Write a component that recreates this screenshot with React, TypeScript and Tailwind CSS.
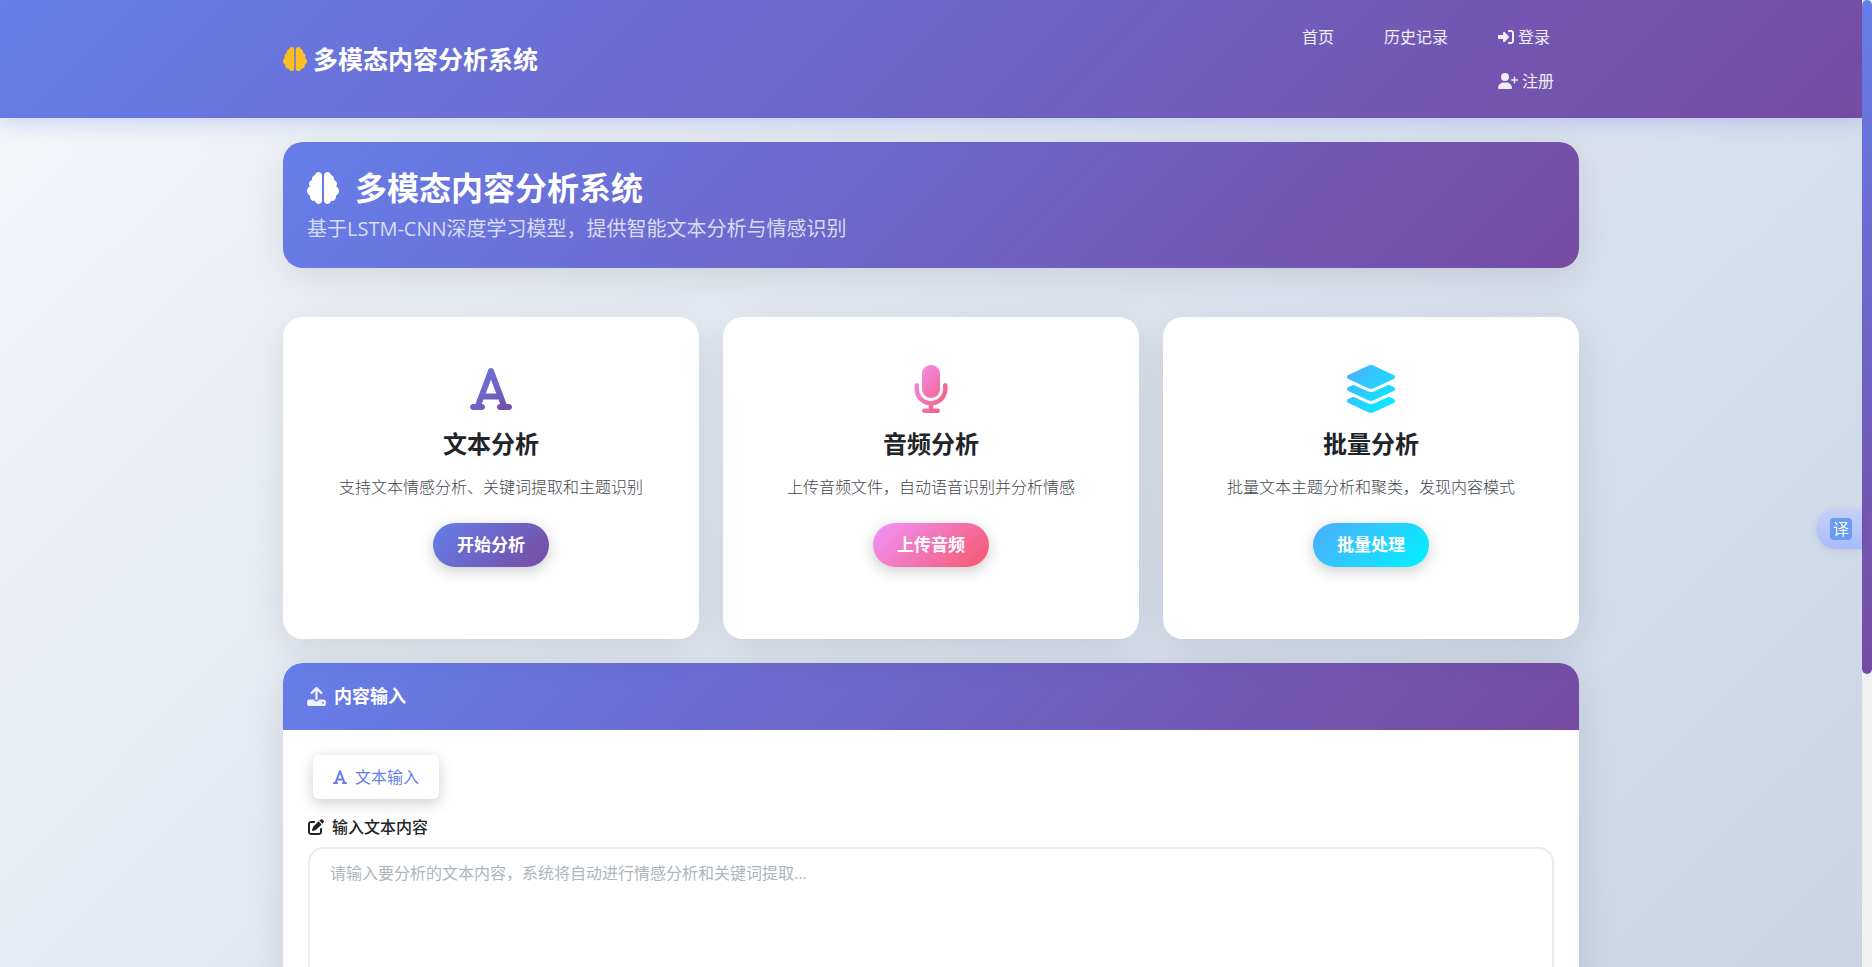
import React, { useState } from 'react';
import {
  FaBrain,
  FaFont,
  FaLayerGroup,
  FaMicrophone,
  FaPenToSquare,
  FaRightToBracket,
  FaUserPlus,
} from 'react-icons/fa6';

const features = [
  {
    id: 'text',
    icon: FaFont,
    iconSize: 'w-12 h-12',
    title: '文本分析',
    desc: '支持文本情感分析、关键词提取和主题识别',
    action: '开始分析',
    from: '#667eea',
    to: '#764ba2',
    button: 'from-[#667eea] to-[#764ba2]',
  },
  {
    id: 'audio',
    icon: FaMicrophone,
    iconSize: 'w-12 h-12',
    title: '音频分析',
    desc: '上传音频文件，自动语音识别并分析情感',
    action: '上传音频',
    from: '#f093fb',
    to: '#f5576c',
    button: 'from-[#f093fb] to-[#f5576c]',
  },
  {
    id: 'batch',
    icon: FaLayerGroup,
    iconSize: 'w-[54px] h-12',
    title: '批量分析',
    desc: '批量文本主题分析和聚类，发现内容模式',
    action: '批量处理',
    from: '#4facfe',
    to: '#00f2fe',
    button: 'from-[#4facfe] to-[#00f2fe]',
  },
];

const UploadIcon = () => (
  <svg viewBox="0 0 512 512" className="w-[19px] h-[19px] fill-current opacity-90" aria-hidden="true">
    <path d="M288 109v211c0 18-14 32-32 32s-32-14-32-32V109l-73 74c-13 12-33 12-46 0s-12-33 0-46L233 9c13-12 33-12 46 0l128 128c12 13 12 33 0 46s-33 12-46 0zM64 336h124c8 32 36 52 68 52s60-20 68-52h124c35 0 64 29 64 64v48c0 35-29 64-64 64H64c-35 0-64-29-64-64v-48c0-35 29-64 64-64zm368 112a24 24 0 1 0 0-48 24 24 0 1 0 0 48z" />
  </svg>
);

const NavLink = ({ label, children }: { label: string, children?: React.ReactNode }) => (
  <a href="#" className="mx-[5px] px-5 py-[10px] flex items-center gap-1 leading-6 text-white/90 hover:text-white">
    {children}
    <span>{label}</span>
  </a>
);

const FeatureCard = ({ feature }: { feature: typeof features[number] }) => {
  const Icon = feature.icon;
  const gradientId = `grad-${feature.id}`;

  return (
    <div className="bg-white rounded-[20px] shadow-[0_10px_40px_rgba(0,0,0,0.1)] min-h-[322px] px-6 py-12 flex flex-col items-center text-center">
      <svg width="0" height="0" className="absolute" aria-hidden="true">
        <linearGradient id={gradientId} x1="0" y1="0" x2="1" y2="1">
          <stop offset="0" stopColor={feature.from} />
          <stop offset="1" stopColor={feature.to} />
        </linearGradient>
      </svg>
      <Icon className={feature.iconSize} fill={`url(#${gradientId})`} />
      <h2 className="mt-4 text-2xl leading-[30px] font-bold text-[#212529]">{feature.title}</h2>
      <p className="mt-4 leading-6 font-light text-[#42474c]">{feature.desc}</p>
      <button className={`mt-6 px-6 py-[10px] rounded-full bg-linear-135/srgb ${feature.button} text-white text-[17px] leading-6 font-bold shadow-[0_4px_15px_rgba(0,0,0,0.2)]`}>
        {feature.action}
      </button>
    </div>
  );
};

export default function App() {
  const [content, setContent] = useState('');

  return (
    <div className="h-screen flex overflow-hidden bg-[#f1f1f1] text-base text-[#212529] font-['Open_Sans','Noto_Sans_CJK_SC',sans-serif]">
      <div className="flex-1 min-w-0 overflow-y-auto [scrollbar-width:none]">
        <div className="min-h-[1387px] bg-linear-135/srgb from-[#f5f7fa] to-[#c3cfe2]">
          {/* Navbar */}
          <header className="relative bg-linear-135/srgb from-[#667eea] to-[#764ba2] shadow-[0_4px_20px_rgba(102,126,234,0.3)] py-[15px]">
            <div className="max-w-[1320px] mx-auto px-3 flex items-center justify-between">
              <a href="#" className="flex items-center gap-1.5 text-[25px] leading-9 font-bold text-white">
                <FaBrain size={24} className="text-[#fbbf24]" />
                <span>多模态内容分析系统</span>
              </a>
              <nav className="flex items-start">
                <NavLink label="首页" />
                <NavLink label="历史记录" />
                <div>
                  <NavLink label="登录">
                    <FaRightToBracket />
                  </NavLink>
                  <NavLink label="注册">
                    <FaUserPlus className="w-5 h-4" />
                  </NavLink>
                </div>
              </nav>
            </div>
          </header>

          <main className="max-w-[1320px] mx-auto px-3 pt-6 pb-12">
            {/* Hero */}
            <section className="rounded-[20px] bg-linear-135/srgb from-[#667eea] to-[#764ba2] shadow-[0_10px_40px_rgba(0,0,0,0.1)] p-6 text-white">
              <h1 className="flex items-center gap-4 text-[32px] leading-[44px] font-bold">
                <FaBrain />
                <span>多模态内容分析系统</span>
              </h1>
              <p className="mt-1 text-xl leading-[30px] text-white/75">基于LSTM-CNN深度学习模型，提供智能文本分析与情感识别</p>
            </section>

            {/* Features */}
            <section className="mt-[49px] grid grid-cols-1 md:grid-cols-3 gap-6">
              {features.map((feature) => (
                <FeatureCard key={feature.id} feature={feature} />
              ))}
            </section>

            {/* Input */}
            <section className="mt-6 rounded-[20px] overflow-hidden bg-white shadow-[0_10px_40px_rgba(0,0,0,0.1)]">
              <h2 className="px-6 py-5 flex items-center gap-2 bg-linear-135/srgb from-[#667eea] to-[#764ba2] text-white text-lg leading-[27px] font-bold">
                <UploadIcon />
                <span>内容输入</span>
              </h2>
              <div className="p-[25px]">
                <button className="ml-[5px] px-5 py-[10px] flex items-center gap-2 leading-6 rounded-md bg-white text-[#667eea] shadow-[0_4px_15px_rgba(0,0,0,0.2)]">
                  <FaFont className="w-[14px] h-4" />
                  <span>文本输入</span>
                </button>
                <label htmlFor="content" className="mt-4 mb-2 flex items-center gap-2 leading-6 font-medium">
                  <FaPenToSquare />
                  <span>输入文本内容</span>
                </label>
                <textarea
                  id="content"
                  rows={12}
                  value={content}
                  onChange={(e) => setContent(e.target.value)}
                  placeholder="请输入要分析的文本内容，系统将自动进行情感分析和关键词提取..."
                  className="block w-full px-5 py-3 leading-6 rounded-[15px] border-2 border-[#e9ecef] bg-white resize-none outline-none placeholder:text-[#adb5bd] focus:border-[#667eea]"
                />
              </div>
            </section>
          </main>
        </div>
      </div>

      {/* Scrollbar */}
      <div className="w-[10px] shrink-0 bg-[#f1f1f1]">
        <div className="h-[69.7%] rounded-full bg-linear-to-b/srgb from-[#667eea] to-[#764ba2]" />
      </div>

      {/* Translate helper */}
      <button className="fixed right-[10px] top-[509px] w-[46px] h-10 pl-[14px] flex items-center rounded-l-full bg-linear-to-b/srgb from-[#c3d0f8] to-[#a9bcfa] shadow-[0_2px_8px_rgba(0,0,0,0.08)]">
        <span className="w-[22px] h-[22px] flex items-center justify-center rounded bg-[#6b9bf0] text-white text-base leading-none">译</span>
      </button>
    </div>
  );
}
